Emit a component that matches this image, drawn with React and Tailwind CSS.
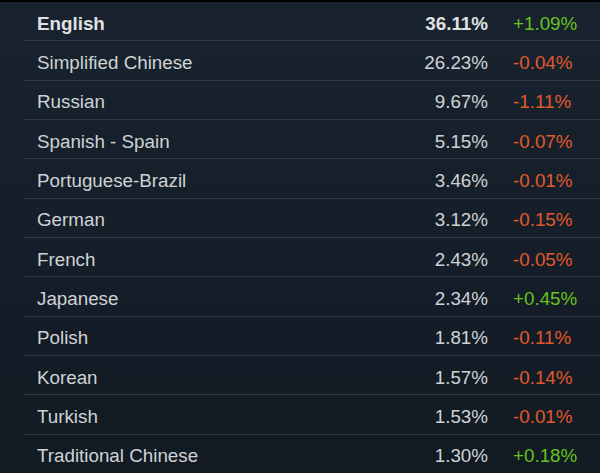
const rows = [
  { name: 'English', share: '36.11%', change: '+1.09%', bold: true },
  { name: 'Simplified Chinese', share: '26.23%', change: '-0.04%' },
  { name: 'Russian', share: '9.67%', change: '-1.11%' },
  { name: 'Spanish - Spain', share: '5.15%', change: '-0.07%' },
  { name: 'Portuguese-Brazil', share: '3.46%', change: '-0.01%' },
  { name: 'German', share: '3.12%', change: '-0.15%' },
  { name: 'French', share: '2.43%', change: '-0.05%' },
  { name: 'Japanese', share: '2.34%', change: '+0.45%' },
  { name: 'Polish', share: '1.81%', change: '-0.11%' },
  { name: 'Korean', share: '1.57%', change: '-0.14%' },
  { name: 'Turkish', share: '1.53%', change: '-0.01%' },
  { name: 'Traditional Chinese', share: '1.30%', change: '+0.18%' },
];

export default function App() {
  return (
    <div className="w-[600px] h-[473px] overflow-hidden border-t-2 border-black bg-gradient-to-b from-[#18232f] to-[#121a23] pl-[24px] font-['Liberation_Sans',Arial,sans-serif] text-[18.8px]">
      {rows.map((row) => (
        <div
          key={row.name}
          className="flex h-[39.33px] items-center border-b border-[#2f3a45] pt-[5px]"
        >
          <div className={`flex-1 pl-[13px] ${row.bold ? 'font-bold text-[#e0e1e2]' : 'text-[#cfd2d5]'}`}>
            {row.name}
          </div>
          <div className={`w-[120px] text-right ${row.bold ? 'font-bold text-[#e0e1e2]' : 'text-[#cfd2d5]'}`}>
            {row.share}
          </div>
          <div
            className={`ml-[25px] w-[87px] ${row.change.startsWith('+') ? 'text-[#66c21c]' : 'text-[#e0592b]'}`}
          >
            {row.change}
          </div>
        </div>
      ))}
    </div>
  );
}
